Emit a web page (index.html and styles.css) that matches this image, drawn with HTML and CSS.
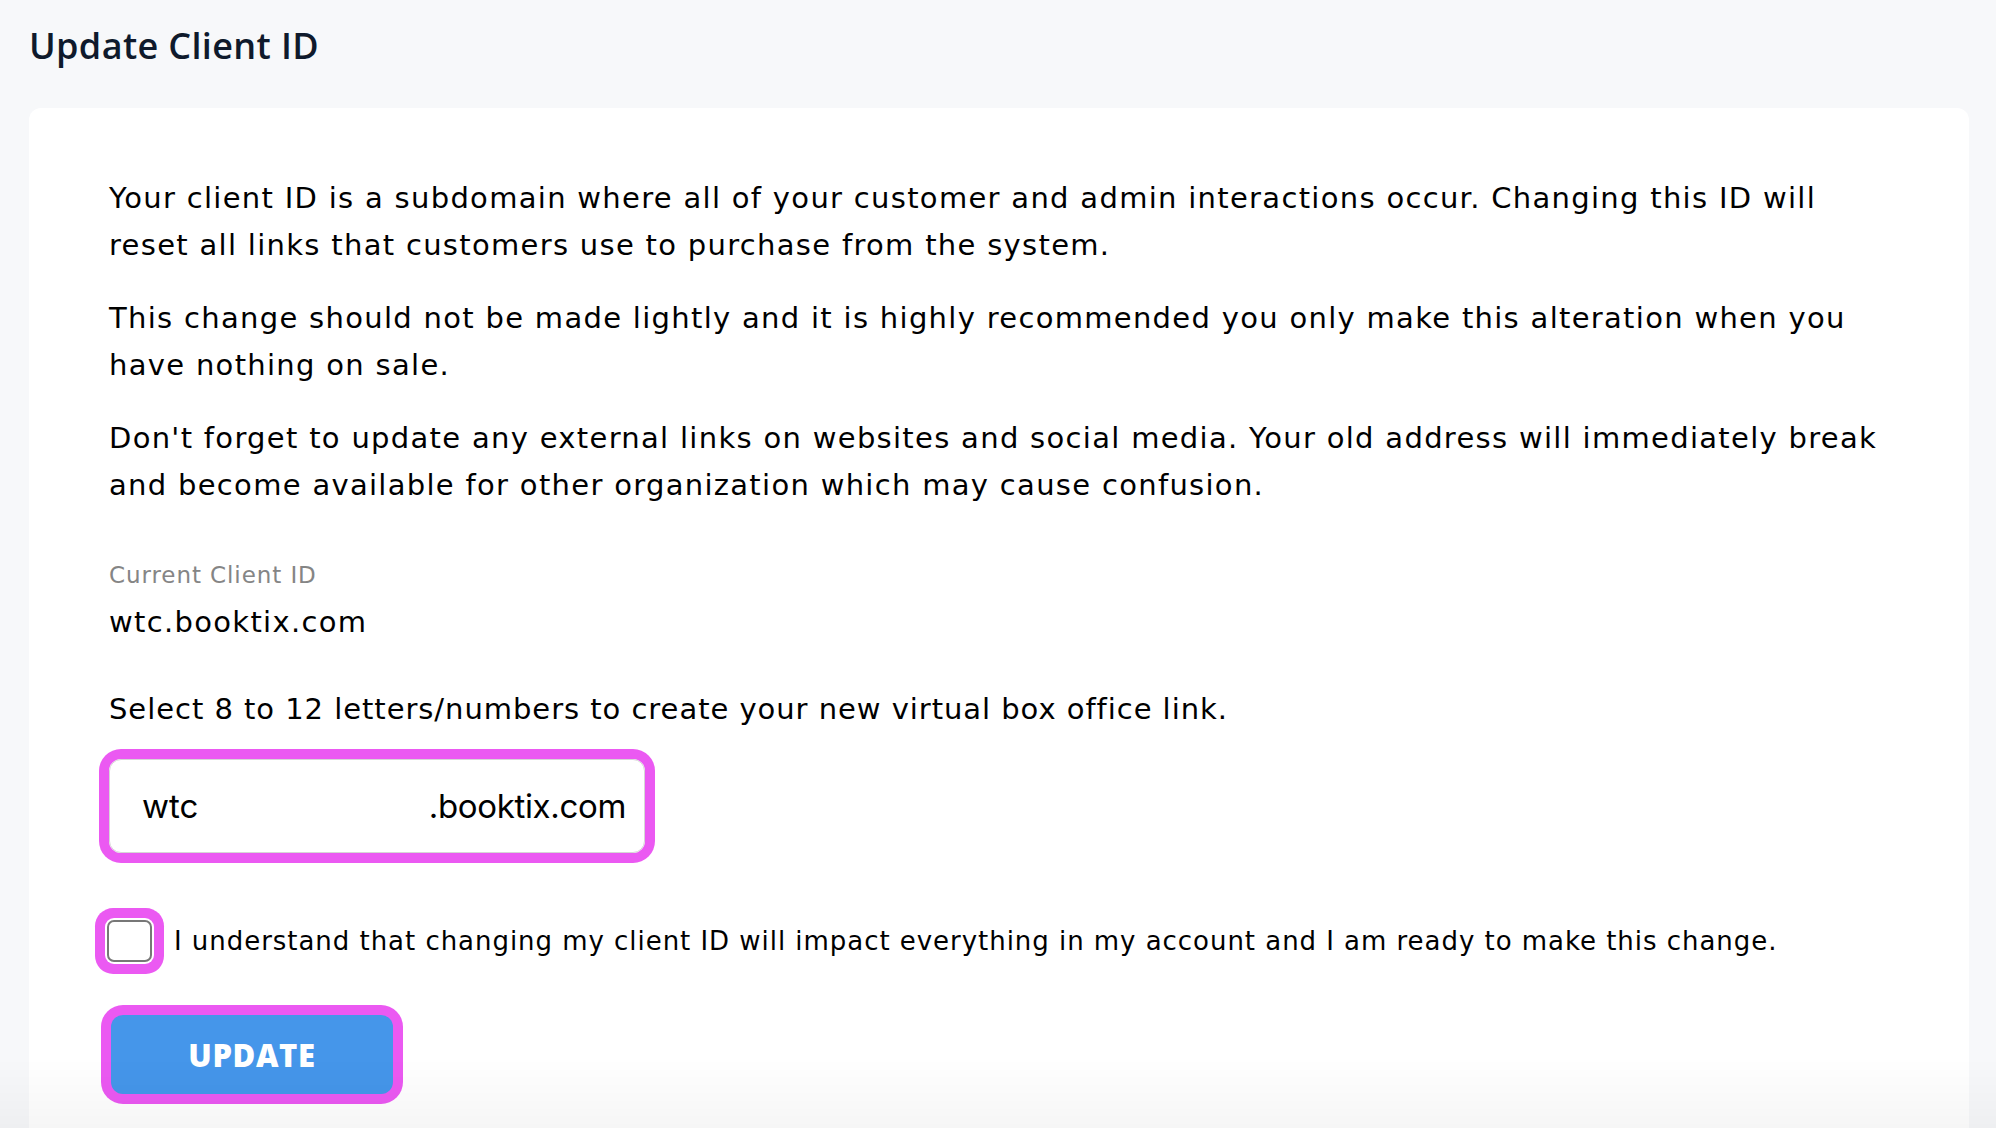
FILE: index.html
```html
<!DOCTYPE html>
<html lang="en">
<head>
    <meta charset="UTF-8">
    <meta name="viewport" content="width=device-width, initial-scale=1.0">
    <title>Update Client ID</title>
    <link rel="stylesheet" href="styles.css">
</head>
<body>
    <div class="page">
        <h1 class="page-title">Update Client ID</h1>

        <div class="card">
            <p class="note">Your client ID is a subdomain where all of your customer and admin interactions occur. Changing this ID will reset all links that customers use to purchase from the system.</p>
            <p class="note">This change should not be made lightly and it is highly recommended you only make this alteration when you have nothing on sale.</p>
            <p class="note">Don't forget to update any external links on websites and social media. Your old address will immediately break and become available for other organization which may cause confusion.</p>

            <div class="current">
                <div class="current-label">Current Client ID</div>
                <div class="current-value">wtc.booktix.com</div>
            </div>

            <p class="hint">Select 8 to 12 letters/numbers to create your new virtual box office link.</p>

            <div class="id-field">
                <input class="id-input" type="text" value="wtc" maxlength="12">
                <span class="id-suffix">.booktix.com</span>
            </div>

            <label class="confirm">
                <input class="confirm-box" type="checkbox">
                <span>I understand that changing my client ID will impact everything in my account and I am ready to make this change.</span>
            </label>

            <button class="update-btn">UPDATE</button>
        </div>
    </div>
</body>
</html>
```

FILE: styles.css
```css
* {
    box-sizing: border-box;
    margin: 0;
    padding: 0;
}

body {
    background-color: #f7f8fa;
    color: #000;
    font-family: 'DejaVu Sans', 'Open Sans', sans-serif;
}

/* soft fade along the bottom of the window */
body::after {
    content: '';
    position: fixed;
    left: 0;
    right: 0;
    bottom: 0;
    height: 70px;
    background: linear-gradient(to bottom, rgba(0, 0, 0, 0), rgba(0, 0, 0, 0.035));
    pointer-events: none;
}

.page {
    padding: 22px 27px 0 29px;
}

.page-title {
    font-family: 'Open Sans', sans-serif;
    font-size: 36px;
    line-height: 48px;
    font-weight: 600;
    letter-spacing: 0.01em;
    color: #0f1a2c;
    margin-bottom: 38px;
}

.card {
    background-color: #fff;
    border-radius: 12px;
    padding: 67px 80px 80px;
}

.note {
    font-size: 29px;
    line-height: 47px;
    letter-spacing: 0.045em;
    margin-bottom: 26px;
}

.note:last-of-type {
    margin-bottom: 0;
}

.current {
    margin-top: 50px;
}

.current-label {
    font-size: 23px;
    line-height: 32px;
    letter-spacing: 0.04em;
    color: #858585;
    margin-bottom: 11px;
}

.current-value {
    font-size: 29px;
    line-height: 40px;
    letter-spacing: 0.045em;
}

.hint {
    margin-top: 47px;
    font-size: 29px;
    line-height: 40px;
    letter-spacing: 0.033em;
}

.id-field {
    display: flex;
    align-items: center;
    width: 536px;
    height: 94px;
    margin-top: 30px;
    padding: 0 18px 0 32px;
    border: 1px solid #d6d6d6;
    border-radius: 12px;
    box-shadow: 0 0 0 10px #eb59f2;
    font-family: Inter, 'Liberation Sans', sans-serif;
    font-size: 33px;
}

.id-input {
    flex: 1;
    min-width: 0;
    border: none;
    outline: none;
    font: inherit;
    color: #000;
    background: transparent;
}

.id-suffix {
    color: #000;
    letter-spacing: -0.01em;
}

.confirm {
    display: flex;
    align-items: center;
    gap: 22px;
    margin-top: 67px;
    font-size: 26px;
    line-height: 40px;
    letter-spacing: 0.037em;
}

.confirm-box {
    appearance: none;
    flex-shrink: 0;
    width: 45px;
    height: 42px;
    margin-left: -2px;
    border: 2px solid #777;
    border-radius: 7px;
    background-color: #fff;
    box-shadow: 0 0 0 2px #fff, 0 0 0 12px #eb59f2;
}

.update-btn {
    display: block;
    width: 282px;
    height: 79px;
    margin: 53px 0 0 2px;
    border: none;
    border-radius: 12px;
    background-color: #4596ea;
    box-shadow: 0 0 0 10px #eb59f2;
    color: #fff;
    font-family: 'Open Sans', sans-serif;
    font-size: 31px;
    font-weight: 800;
    letter-spacing: 0.02em;
    cursor: pointer;
}
```
